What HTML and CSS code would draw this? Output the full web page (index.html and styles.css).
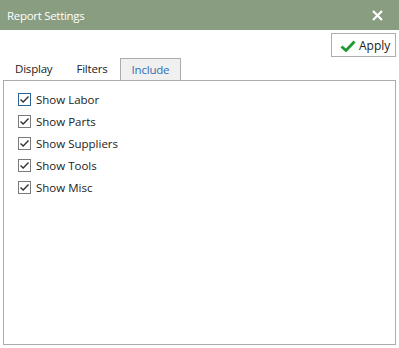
FILE: index.html
```html
<!DOCTYPE html>
<html lang="en">
<head>
    <meta charset="UTF-8">
    <title>Report Settings</title>
    <link rel="stylesheet" href="styles.css">
</head>
<body>
    <div class="window">
        <div class="titlebar">
            <span class="title">Report Settings</span>
            <span class="close">
                <svg width="11" height="11" viewBox="0 0 11 11"><path d="M1 1 L10 10 M10 1 L1 10" stroke="#fff" stroke-width="2.2" fill="none"/></svg>
            </span>
        </div>

        <div class="toolbar">
            <button class="apply">
                <svg width="16" height="12" viewBox="0 0 16 12"><path d="M1.5 6.5 L6 10.5 L14.5 1.5" stroke="#1f9a32" stroke-width="2.8" fill="none"/></svg>
                Apply
            </button>
        </div>

        <div class="tabs">
            <span class="tab">Display</span>
            <span class="tab">Filters</span>
            <span class="tab active">Include</span>
        </div>

        <div class="panel">
            <label class="item"><span class="box focus"><svg width="11" height="9" viewBox="0 0 11 9"><path d="M1.5 4.5 L4.2 7 L9.5 1.5" stroke="#333" stroke-width="1.4" fill="none"/></svg></span>Show Labor</label>
            <label class="item"><span class="box"><svg width="11" height="9" viewBox="0 0 11 9"><path d="M1.5 4.5 L4.2 7 L9.5 1.5" stroke="#333" stroke-width="1.4" fill="none"/></svg></span>Show Parts</label>
            <label class="item"><span class="box"><svg width="11" height="9" viewBox="0 0 11 9"><path d="M1.5 4.5 L4.2 7 L9.5 1.5" stroke="#333" stroke-width="1.4" fill="none"/></svg></span>Show Suppliers</label>
            <label class="item"><span class="box"><svg width="11" height="9" viewBox="0 0 11 9"><path d="M1.5 4.5 L4.2 7 L9.5 1.5" stroke="#333" stroke-width="1.4" fill="none"/></svg></span>Show Tools</label>
            <label class="item"><span class="box"><svg width="11" height="9" viewBox="0 0 11 9"><path d="M1.5 4.5 L4.2 7 L9.5 1.5" stroke="#333" stroke-width="1.4" fill="none"/></svg></span>Show Misc</label>
        </div>
    </div>
</body>
</html>
```

FILE: styles.css
```css
body {
    margin: 0;
    background: #fff;
    font-family: 'Open Sans', sans-serif;
    font-size: 11.5px;
    color: #222;
}

.window {
    width: 399px;
    height: 348px;
    display: flex;
    flex-direction: column;
}

.titlebar {
    height: 30px;
    background: #899e80;
    display: flex;
    align-items: center;
    justify-content: space-between;
    padding: 0 16px 0 7px;
    color: #fff;
    font-size: 11.5px;
    letter-spacing: -0.3px;
}

.close {
    display: flex;
}

.toolbar {
    height: 28px;
    display: flex;
    justify-content: flex-end;
    align-items: flex-start;
    padding: 3px 3px 0 0;
    box-sizing: border-box;
}

.apply {
    width: 65px;
    height: 24px;
    border: 1px solid #adadad;
    background: #fff;
    font-family: inherit;
    font-size: 12px;
    color: #222;
    display: flex;
    align-items: center;
    gap: 3px;
    padding: 1px 0 0 8px;
}

.tabs {
    display: flex;
    height: 22px;
    padding-left: 3px;
}

.tab {
    padding: 0 12px;
    display: flex;
    align-items: center;
    line-height: 1;
    letter-spacing: -0.2px;
}

.tab.active {
    padding: 0 11px;
    background: #f0f0f0;
    border: 1px solid #acacac;
    border-bottom: none;
    color: #2e6db4;
}

.panel {
    margin: 0 3px 3px 3px;
    flex: 1;
    border: 1px solid #acacac;
    padding: 12px 0 0 14px;
    display: flex;
    flex-direction: column;
    gap: 9px;
}

.item {
    display: flex;
    align-items: center;
    gap: 5px;
    height: 13px;
}

.box {
    width: 11px;
    height: 11px;
    border: 1px solid #7a7a7a;
    background: #fff;
    display: flex;
    align-items: center;
    justify-content: center;
}

.box.focus {
    border-color: #2b6597;
}
```
